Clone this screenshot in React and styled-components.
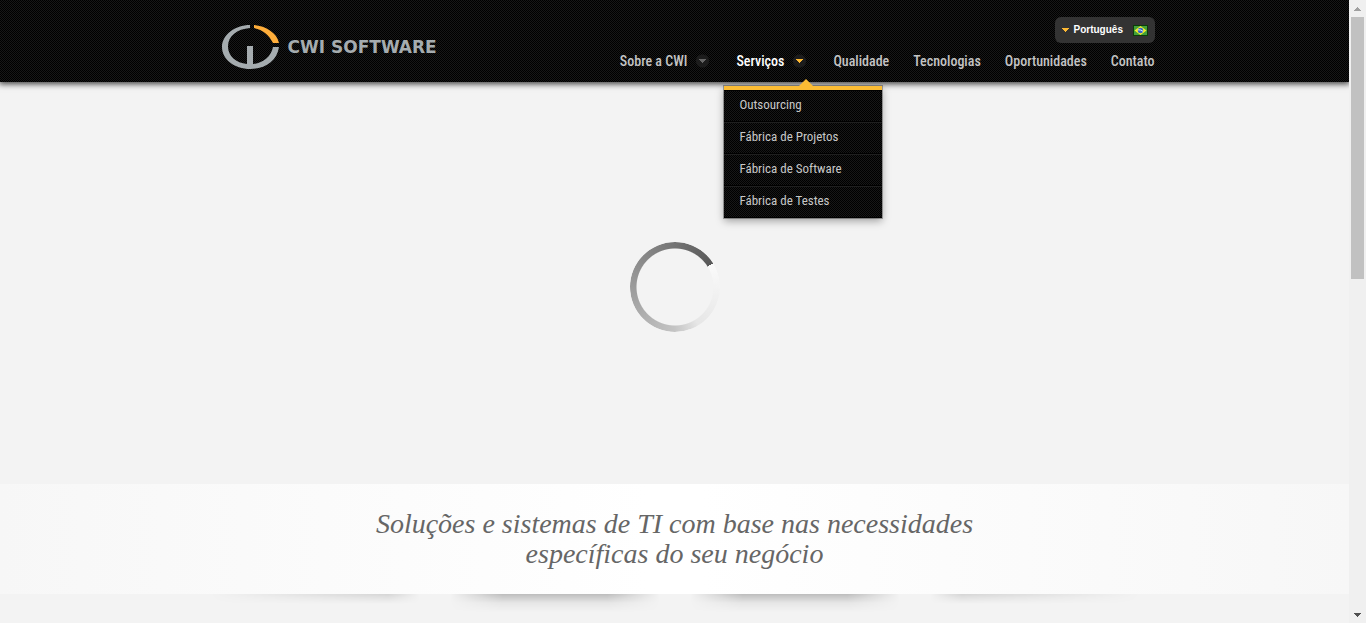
import React from "react";
import styled, { createGlobalStyle, css } from "styled-components";

const GlobalStyle = createGlobalStyle`
  *, *::before, *::after { box-sizing: border-box; }
  html, body { margin: 0; padding: 0; background: #f3f3f3; }
  ul { list-style: none; margin: 0; padding: 0; }
  a { color: inherit; text-decoration: none; }
`;

const narrow = `"Roboto Condensed", Roboto, "Liberation Sans", sans-serif`;

const carbon = css`
  background-color: #0a0a0a;
  background-image:
    conic-gradient(#171717 25%, #000 0 50%, #171717 0 75%, #000 0);
  background-size: 2px 2px;
`;

const Window = styled.div`
  display: grid;
  grid-template-columns: minmax(0, 1fr) 17px;
  height: 100vh;
  overflow: hidden;
`;

const Page = styled.div`
  display: flex;
  flex-direction: column;
  min-width: 0;
  height: 100%;
  overflow: hidden;
`;

const Header = styled.header`
  ${carbon}
  position: relative;
  z-index: 2;
  flex: none;
  box-shadow: 0 1px 6px 1px rgba(0, 0, 0, 0.75);
`;

const HeaderInner = styled.div`
  display: flex;
  justify-content: space-between;
  max-width: 960px;
  height: 82px;
  margin: 0 auto;
  padding-left: 27px;
`;

const Logo = styled.a`
  display: flex;
  align-items: center;
  align-self: flex-start;
  gap: 9px;
  padding-top: 25px;
  color: #a5acaf;
  font: 700 17px/44px "DejaVu Sans", sans-serif;
  white-space: nowrap;
`;

const Tools = styled.div`
  display: flex;
  flex-direction: column;
  align-items: flex-end;
  padding-top: 17px;
`;

const Language = styled.button`
  display: flex;
  align-items: center;
  gap: 5px;
  width: 100px;
  height: 26px;
  padding: 0 7px;
  border: 0;
  border-radius: 6px;
  background: #333;
  color: #fff;
  font: 700 10px/24px "Liberation Sans", Arial, sans-serif;

  & > svg:last-child { margin-left: auto; }
`;

const NavList = styled.ul`
  display: flex;
  gap: 24px;
  padding-top: 6px;
`;

const NavItem = styled.li`
  position: relative;
`;

const NavLink = styled.a`
  display: flex;
  align-items: center;
  gap: 6px;
  color: ${(p) => (p.$active ? "#fff" : "#c4c4c4")};
  font: 500 14px/24px ${narrow};
  white-space: nowrap;
`;

const Dot = styled.span`
  display: grid;
  place-items: center;
  width: 19px;
  height: 14px;
  color: ${(p) => (p.$active ? "#fdb933" : "#666")};
  background: radial-gradient(circle, #1c1c1c 0 6px, transparent 7px);
`;

const Submenu = styled.ul`
  position: absolute;
  top: 37px;
  left: -12px;
  width: 158px;
  border-top: 4px solid #fbbc34;
  box-shadow: 0 0 0 1px rgba(0, 0, 0, 0.3), 0 3px 8px rgba(0, 0, 0, 0.35);
  ${carbon}

  &::before {
    content: "";
    position: absolute;
    top: -11px;
    left: 75px;
    border: solid transparent;
    border-width: 0 7px 7px;
    border-bottom-color: #fbbc34;
  }
`;

const SubItem = styled.li`
  border-top: 1px solid ${(p) => (p.$first ? "#000" : "#1f1f1f")};
  border-bottom: 1px solid #000;
`;

const SubLink = styled.a`
  display: block;
  padding: 0 15px 2px;
  color: #c8c8c8;
  font: 13px/28px ${narrow};
`;

const Stage = styled.section`
  display: grid;
  place-items: center;
  flex: none;
  height: 402px;
  padding-top: 8px;
`;

const Spinner = styled.div`
  width: 90px;
  height: 90px;
  border-radius: 50%;
  background: conic-gradient(from 58deg, #fafafa, #e6e6e6 25%, #c4c4c4 34%, #a0a0a0 56%, #7d7d7d 78%, #585858);
  mask: radial-gradient(circle, transparent 38px, #000 39px);
`;

const Banner = styled.section`
  flex: none;
  padding: 25px 0;
  background: linear-gradient(90deg, #f7f7f7, #fff 48%, #fff 52%, #f7f7f7);
`;

const Tagline = styled.h1`
  max-width: 700px;
  margin: 0 auto;
  color: #666;
  font: italic 400 28px/30px "Liberation Serif", serif;
  text-align: center;
`;

const Shadows = styled.div`
  display: flex;
  justify-content: center;
  gap: 30px;
  overflow: hidden;
`;

const fades = {
  left: "transparent, #000 85%, transparent",
  middle: "transparent, #000 25%, #000 75%, transparent",
  right: "transparent, #000 15%, transparent",
};

const Shade = styled.div`
  width: 210px;
  height: ${(p) => (p.$fade === "middle" ? 18 : 10)}px;
  background: linear-gradient(rgba(0, 0, 0, ${(p) => (p.$fade === "middle" ? 0.22 : 0.12)}), rgba(0, 0, 0, 0.05) 50%, transparent);
  mask: linear-gradient(90deg, ${(p) => fades[p.$fade]});
`;

const Scrollbar = styled.div`
  display: flex;
  flex-direction: column;
  align-items: center;
  background: #f0f0f0;
`;

const ScrollEnd = styled.div`
  display: grid;
  place-items: center;
  width: 17px;
  height: 17px;
  color: ${(p) => (p.$off ? "#a0a0a0" : "#505050")};
`;

const Track = styled.div`
  flex: 1;
  width: 13px;
`;

const Thumb = styled.div`
  height: calc(100% * 4 / 9);
  background: #c1c1c1;
`;

const LogoMark = () => (
  <svg width="57" height="44" viewBox="0 0 57 44" aria-hidden="true">
    <path fill="#a5acaf" d="M28 0V3C15 4 6 11 6 21.500C6 31 14 38 25 39V21H31V39C41 38 49 32 51 22H57C55 36 43 44 28.500 44C12 44 0 34 0 22C0 10 13 0 28 0Z" />
    <path fill="#ffae3b" d="M32 0C44 1 55 8 57 18H51C47 10 41 5 32 3Z" />
  </svg>
);

const Caret = ({ color = "currentColor", up }) => (
  <svg width="7" height="4" viewBox="0 0 7 4" shapeRendering="crispEdges" aria-hidden="true">
    <path fill={color} d={up ? "M0 4L3.500 0L7 4Z" : "M0 0H7L3.500 4Z"} />
  </svg>
);

const Flag = () => (
  <svg width="15" height="11" viewBox="0 0 15 11" aria-hidden="true">
    <rect width="15" height="11" fill="#0c3d08" />
    <rect x="1" y="1" width="13" height="9" fill="#43a13a" />
    <path fill="#f8ee28" d="M7.500 1L13.500 5.500L7.500 10L1.500 5.500Z" />
    <circle cx="7.500" cy="5.500" r="2.700" fill="#3565c8" />
    <path d="M5 4.800Q8 4.500 10 6.300" stroke="#d8e8ff" fill="none" />
  </svg>
);

const nav = [
  { label: "Sobre a CWI", menu: true },
  { label: "Serviços", menu: true, active: true, items: ["Outsourcing", "Fábrica de Projetos", "Fábrica de Software", "Fábrica de Testes"] },
  { label: "Qualidade" },
  { label: "Tecnologias" },
  { label: "Oportunidades" },
  { label: "Contato" },
];

export default function App() {
  return (
    <>
      <GlobalStyle />
      <Window>
        <Page>
          <Header>
            <HeaderInner>
              <Logo href="#">
                <LogoMark />
                <span>CWI SOFTWARE</span>
              </Logo>
              <Tools>
                <Language type="button">
                  <Caret color="#fdb933" />
                  <span>Português</span>
                  <Flag />
                </Language>
                <nav>
                  <NavList>
                    {nav.map(({ label, menu, active, items }) => (
                      <NavItem key={label}>
                        <NavLink href="#" $active={active}>
                          {label}
                          {menu && <Dot $active={active}><Caret /></Dot>}
                        </NavLink>
                        {items && (
                          <Submenu>
                            {items.map((item, i) => (
                              <SubItem key={item} $first={i === 0}>
                                <SubLink href="#">{item}</SubLink>
                              </SubItem>
                            ))}
                          </Submenu>
                        )}
                      </NavItem>
                    ))}
                  </NavList>
                </nav>
              </Tools>
            </HeaderInner>
          </Header>
          <Stage>
            <Spinner role="status" />
          </Stage>
          <Banner>
            <Tagline>Soluções e sistemas de TI com base nas necessidades específicas do seu negócio</Tagline>
          </Banner>
          <Shadows>
            <Shade $fade="left" />
            <Shade $fade="middle" />
            <Shade $fade="middle" />
            <Shade $fade="right" />
          </Shadows>
        </Page>
        <Scrollbar>
          <ScrollEnd $off><Caret up /></ScrollEnd>
          <Track><Thumb /></Track>
          <ScrollEnd><Caret /></ScrollEnd>
        </Scrollbar>
      </Window>
    </>
  );
}
